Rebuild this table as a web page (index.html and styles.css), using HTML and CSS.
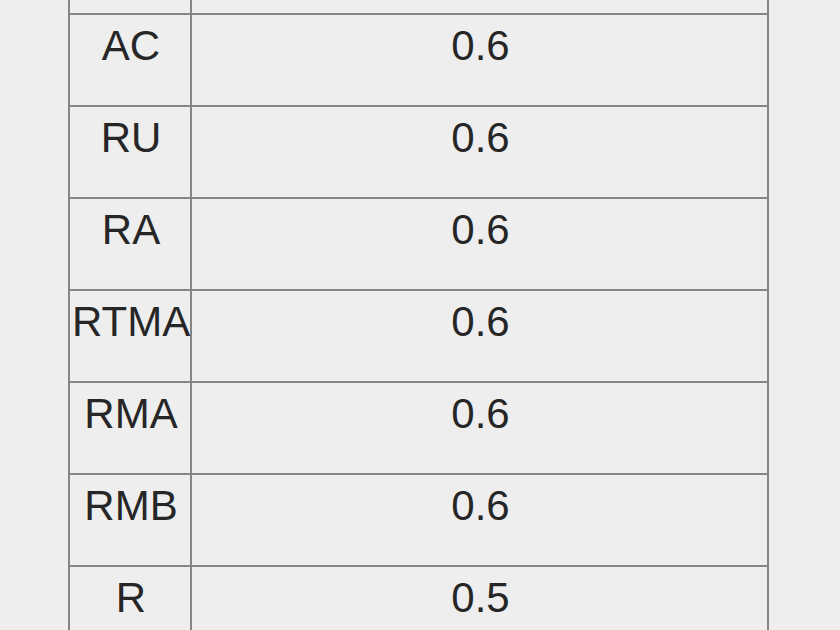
FILE: index.html
```html
<!DOCTYPE html>
<html>
<head>
<meta charset="utf-8">
<link rel="stylesheet" href="styles.css">
</head>
<body>
<div class="page">
  <table class="grid">
    <colgroup><col class="c-key"><col class="c-val"></colgroup>
    <tbody>
      <tr class="cut"><td></td><td></td></tr>
      <tr><td>AC</td><td>0.6</td></tr>
      <tr><td>RU</td><td>0.6</td></tr>
      <tr><td>RA</td><td>0.6</td></tr>
      <tr><td>RTMA</td><td>0.6</td></tr>
      <tr><td>RMA</td><td>0.6</td></tr>
      <tr><td>RMB</td><td>0.6</td></tr>
      <tr><td>R</td><td>0.5</td></tr>
    </tbody>
  </table>
</div>
</body>
</html>
```

FILE: styles.css
```css
html, body {
  margin: 0;
  padding: 0;
  background: #eeeeee;
  overflow: hidden;
}
.page {
  padding-left: 68px;
  height: 630px;
  overflow: hidden;
}
.grid {
  border-collapse: collapse;
  table-layout: fixed;
  width: 701px;
  font-family: "Liberation Sans", Arial, sans-serif;
  font-size: 42px;
  color: #262626;
}
.c-key { width: 122px; }
.grid td {
  border: 2px solid #858585;
  text-align: center;
  vertical-align: top;
  padding: 7px 0 0 2px;
  height: 92px;
  box-sizing: border-box;
  white-space: nowrap;
  line-height: 48px;
}
.grid tr.cut td {
  border-top: none;
  height: 14px;
  padding: 0;
}
```
